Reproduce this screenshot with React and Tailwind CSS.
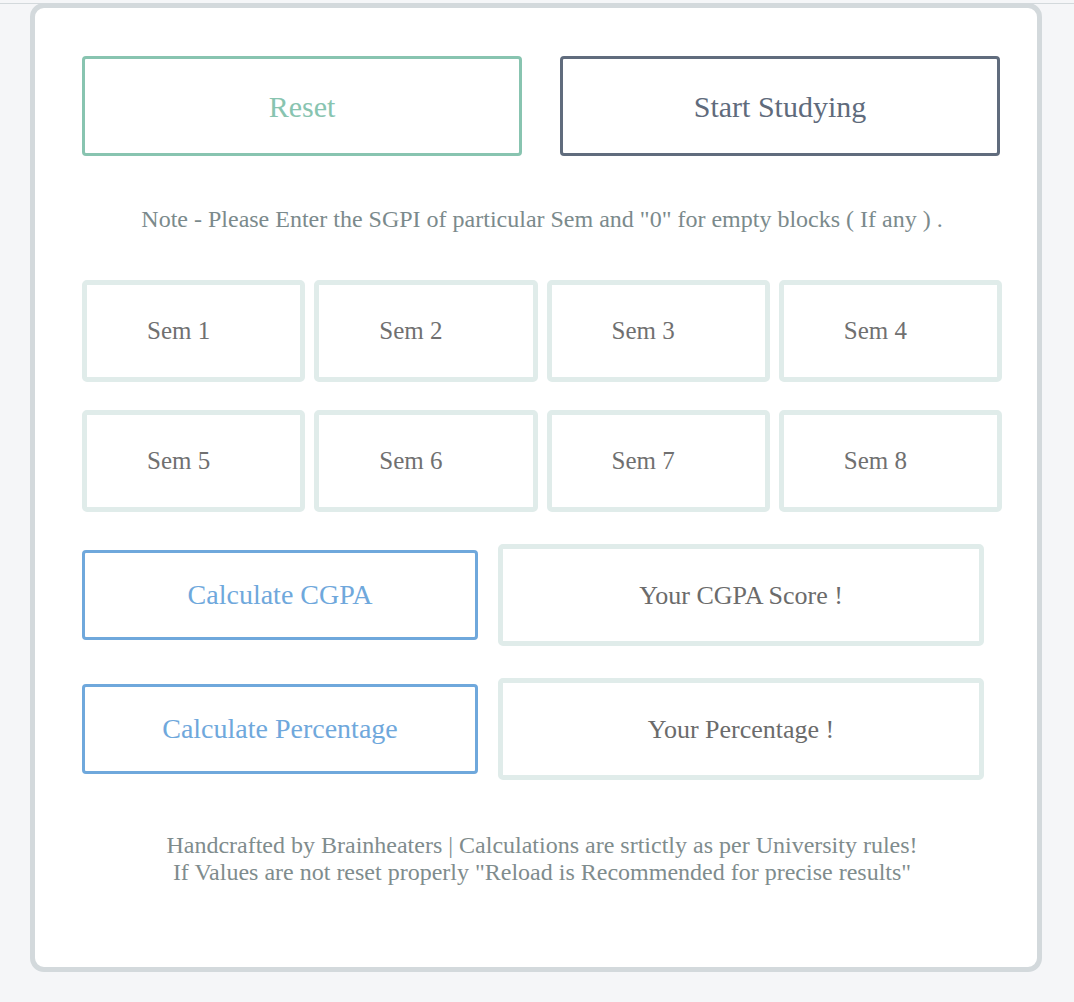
import React from 'react';

const sems = ['Sem 1', 'Sem 2', 'Sem 3', 'Sem 4', 'Sem 5', 'Sem 6', 'Sem 7', 'Sem 8'];

export default function App() {
  return (
    <div
      className="min-h-screen bg-[#f5f6f8] pt-[3px]"
      style={{ fontFamily: '"Liberation Serif", "Times New Roman", serif' }}
    >
      <div className="border-t border-[#d3d9dc]">
        <div className="ml-[30px] -mt-px w-[1012px] h-[969px] bg-white border-[5px] border-[#d3d9dc] rounded-[14px] pl-[47px] pt-[48px]">
          {/* top buttons */}
          <div className="flex gap-[38px] w-[918px]">
            <button className="w-[440px] h-[100px] border-[3px] border-[#88c4b0] rounded-[4px] text-[#88c4b0] text-[30px]">
              Reset
            </button>
            <button className="w-[440px] h-[100px] border-[3px] border-[#606c7d] rounded-[4px] text-[#5f6b7c] text-[30px]">
              Start Studying
            </button>
          </div>

          <p className="mt-[49px] w-[920px] text-center text-[24px] leading-[28px] text-[#7b8a8c]">
            Note - Please Enter the SGPI of particular Sem and "0" for empty blocks ( If any ) .
          </p>

          {/* semester inputs */}
          <div className="mt-[47px] grid grid-cols-4 gap-x-[9px] gap-y-[28px] w-[920px]">
            {sems.map((s) => (
              <input
                key={s}
                placeholder={s}
                className="h-[102px] w-full border-[5px] border-[#e0ecea] rounded-[5px] pl-[60px] text-[25px] text-[#707070] placeholder:text-[#707070] outline-none"
              />
            ))}
          </div>

          {/* results */}
          <div className="mt-[32px] flex flex-col gap-[32px]">
            <div className="flex items-center gap-[20px]">
              <button className="w-[396px] h-[90px] border-[3px] border-[#6fa8dc] rounded-[4px] text-[#6fa8dc] text-[28px]">
                Calculate CGPA
              </button>
              <div className="w-[486px] h-[102px] border-[5px] border-[#e0ecea] rounded-[5px] flex items-center justify-center text-[26px] text-[#6b6b6b]">
                Your CGPA Score !
              </div>
            </div>
            <div className="flex items-center gap-[20px]">
              <button className="w-[396px] h-[90px] border-[3px] border-[#6fa8dc] rounded-[4px] text-[#6fa8dc] text-[28px]">
                Calculate Percentage
              </button>
              <div className="w-[486px] h-[102px] border-[5px] border-[#e0ecea] rounded-[5px] flex items-center justify-center text-[26px] text-[#6b6b6b]">
                Your Percentage !
              </div>
            </div>
          </div>

          <div className="mt-[52px] w-[920px] text-center text-[24px] leading-[27px] text-[#7f8c8d]">
            <p>Handcrafted by Brainheaters | Calculations are srtictly as per University rules!</p>
            <p>If Values are not reset properly "Reload is Recommended for precise results"</p>
          </div>
        </div>
      </div>
    </div>
  );
}
